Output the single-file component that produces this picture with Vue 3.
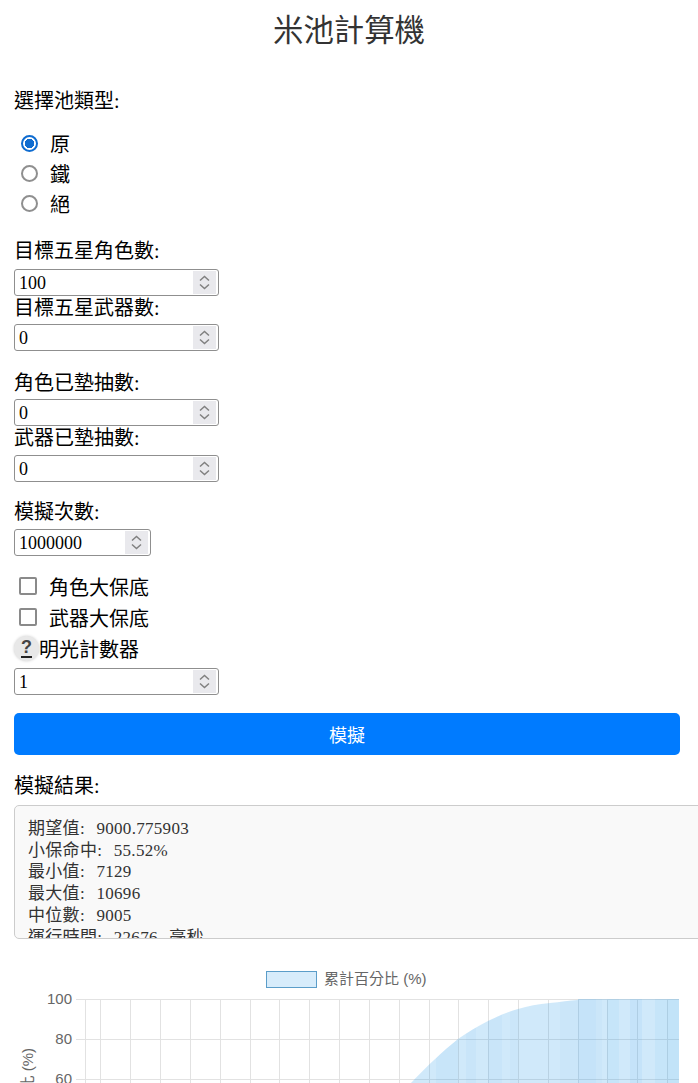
<script setup>
import { ref } from 'vue';

const poolTypes = ['原', '鐵', '絕'];
const pool = ref('原');

const resultLines = [
  '期望值: 9000.775903',
  '小保命中: 55.52%',
  '最小值: 7129',
  '最大值: 10696',
  '中位數: 9005',
  '運行時間: 22676 毫秒',
];

// chart gridlines, read off the reference
const xGrid = [85, 100, 130, 160, 190, 220, 250, 279, 309, 339, 369, 399, 429, 458, 488, 518, 548, 578, 607, 637, 667];
const yTicks = [
  { label: '100', y: 999 },
  { label: '80', y: 1039 },
  { label: '60', y: 1079 },
];

const curve = 'M411 1083 C427 1066 443 1051 458 1039 C468 1032 478 1026 488 1021 C498 1016 508 1012 518 1009 C528 1006 538 1004 550 1003 C560 1002 570 1000.5 578 1000 L578 999 L679 999 L679 1083 Z';
const bands = [
  { x: 436, w: 22, o: 0.05 },
  { x: 466, w: 10, o: 0.04 },
  { x: 488, w: 14, o: 0.04 },
  { x: 510, w: 8, o: 0.03 },
  { x: 560, w: 18, o: 0.03 },
  { x: 578, w: 18, o: 0.07 },
  { x: 596, w: 6, o: 0.03 },
  { x: 607, w: 12, o: 0.06 },
  { x: 630, w: 12, o: 0.07 },
  { x: 655, w: 12, o: 0.06 },
  { x: 667, w: 12, o: 0.09 },
];
</script>

<template>
  <div class="page">
    <h1 class="title">米池計算機</h1>

    <div class="group pool-group">
      <div class="label">選擇池類型:</div>
      <div class="radios">
        <label v-for="type in poolTypes" :key="type" class="option">
          <input v-model="pool" type="radio" name="pool" :value="type" class="radio">
          <span>{{ type }}</span>
        </label>
      </div>
    </div>

    <div class="group">
      <label class="label first">目標五星角色數:</label>
      <div class="field">
        <input class="num" type="number" value="100">
        <svg class="spin" width="23" height="23" viewBox="0 0 23 23"><path d="M7 9.5 L11.5 5.5 L16 9.5 M7 13.5 L11.5 17.5 L16 13.5" /></svg>
      </div>
      <label class="label">目標五星武器數:</label>
      <div class="field">
        <input class="num" type="number" value="0">
        <svg class="spin" width="23" height="23" viewBox="0 0 23 23"><path d="M7 9.5 L11.5 5.5 L16 9.5 M7 13.5 L11.5 17.5 L16 13.5" /></svg>
      </div>
    </div>

    <div class="group pity">
      <label class="label">角色已墊抽數:</label>
      <div class="field">
        <input class="num" type="number" value="0">
        <svg class="spin" width="23" height="23" viewBox="0 0 23 23"><path d="M7 9.5 L11.5 5.5 L16 9.5 M7 13.5 L11.5 17.5 L16 13.5" /></svg>
      </div>
      <label class="label">武器已墊抽數:</label>
      <div class="field">
        <input class="num" type="number" value="0">
        <svg class="spin" width="23" height="23" viewBox="0 0 23 23"><path d="M7 9.5 L11.5 5.5 L16 9.5 M7 13.5 L11.5 17.5 L16 13.5" /></svg>
      </div>
    </div>

    <div class="group sims">
      <label class="label">模擬次數:</label>
      <div class="field short">
        <input class="num" type="number" value="1000000">
        <svg class="spin" width="23" height="23" viewBox="0 0 23 23"><path d="M7 9.5 L11.5 5.5 L16 9.5 M7 13.5 L11.5 17.5 L16 13.5" /></svg>
      </div>
    </div>

    <div class="checks">
      <label class="option check-row">
        <input type="checkbox" class="check">
        <span>角色大保底</span>
      </label>
      <label class="option check-row">
        <input type="checkbox" class="check">
        <span>武器大保底</span>
      </label>
      <div class="counter-row">
        <span class="help"><span class="help-mark">?</span></span>
        <span>明光計數器</span>
      </div>
      <div class="field">
        <input class="num" type="number" value="1">
        <svg class="spin" width="23" height="23" viewBox="0 0 23 23"><path d="M7 9.5 L11.5 5.5 L16 9.5 M7 13.5 L11.5 17.5 L16 13.5" /></svg>
      </div>
    </div>

    <button class="run">模擬</button>

    <div class="label result-label">模擬結果:</div>
    <div class="result">
      <pre class="result-text">{{ resultLines.join('\n') }}</pre>
    </div>

    <svg class="chart" width="698" height="123" viewBox="0 960 698 123">
      <rect x="266.5" y="971.5" width="50" height="16" fill="#d7ecfb" stroke="#5b9dc9" />
      <text x="324" y="984" class="legend">累計百分比 (%)</text>

      <g stroke="#e2e2e2" stroke-width="1">
        <line v-for="x in xGrid" :key="x" :x1="x + 0.5" :x2="x + 0.5" y1="999" y2="1083" />
        <line v-for="t in yTicks" :key="t.y" x1="76" x2="679" :y1="t.y + 0.5" :y2="t.y + 0.5" />
      </g>

      <clipPath id="under"><path :d="curve" /></clipPath>
      <path :d="curve" fill="#36a2eb" fill-opacity="0.23" />
      <rect v-for="b in bands" :key="b.x" :x="b.x" y="999" :width="b.w" height="84" fill="#36a2eb" :fill-opacity="b.o" clip-path="url(#under)" />

      <text v-for="t in yTicks" :key="t.label" x="72" :y="t.y + 5" class="tick">{{ t.label }}</text>
      <text class="axis" transform="translate(33 1048) rotate(-90)">累計百分比 (%)</text>
    </svg>
  </div>
</template>

<style>
html, body {
  margin: 0;
  background: #fff;
}
</style>

<style scoped>
.page {
  box-sizing: border-box;
  width: 698px;
  height: 1083px;
  overflow: hidden;
  padding: 0 14px;
  color: #000;
  font-family: "Liberation Serif", "Noto Sans CJK TC", serif;
  font-size: 20px;
}

.title {
  margin: 0;
  padding-top: 12px;
  text-align: center;
  font-size: 30.4px;
  line-height: 38px;
  font-weight: 400;
  color: #333;
}

.group {
  display: flex;
  flex-direction: column;
  align-items: flex-start;
  margin-bottom: 19.5px;
}

.pool-group {
  margin-top: 39px;
  margin-bottom: 20.5px;
}

.label {
  display: block;
  height: 24px;
  line-height: 24px;
  margin-bottom: 4.5px;
}

.first {
  margin-bottom: 6px;
}

.radios {
  margin-top: 10.5px;
}

.option {
  display: flex;
  align-items: center;
  height: 30px;
}

.radio {
  appearance: none;
  box-sizing: border-box;
  width: 17px;
  height: 17px;
  margin: 0 12px 0 7px;
  border: 2px solid #8f8f8f;
  border-radius: 50%;
  background: #fff;
}

.radio:checked {
  border-color: #0f6cd0;
  background: radial-gradient(circle, #0f6cd0 0 4.5px, #fff 5px);
}

.field {
  position: relative;
  width: 205px;
  height: 27px;
}

.short {
  width: 137px;
}

.num {
  box-sizing: border-box;
  display: block;
  width: 100%;
  height: 100%;
  padding: 2px 4px 0;
  border: 1px solid #8f8f8f;
  border-radius: 3px;
  font-family: "Liberation Serif", serif;
  font-size: 18px;
  background: #fff;
  color: #000;
}

.num::-webkit-inner-spin-button {
  -webkit-appearance: none;
  margin: 0;
}

/* windows style stepper, drawn over the input */
.spin {
  position: absolute;
  top: 2px;
  right: 3px;
  background: #e9e9ed;
  pointer-events: none;
}

.spin path {
  fill: none;
  stroke: #808080;
  stroke-width: 1.5;
}

.pity {
  margin-bottom: 18.5px;
}

.sims {
  margin-bottom: 15px;
}

.checks {
  display: flex;
  flex-direction: column;
  align-items: flex-start;
}

.check-row {
  height: 31px;
}

.check {
  appearance: none;
  box-sizing: border-box;
  width: 18px;
  height: 18px;
  margin: 0 12px 0 5px;
  border: 2px solid #8a8a8a;
  border-radius: 2px;
  background: #fff;
}

.counter-row {
  display: flex;
  align-items: center;
  height: 31px;
  margin-bottom: 4.5px;
}

.help {
  display: flex;
  align-items: center;
  justify-content: center;
  width: 25px;
  height: 25px;
  border-radius: 50%;
  background: #e8e8e8;
  box-shadow: 0 0 3px rgba(0, 0, 0, 0.2);
}

.help-mark {
  display: block;
  width: 11px;
  line-height: 17px;
  text-align: center;
  border-bottom: 2px solid #222;
  font-family: "Liberation Sans", sans-serif;
  font-size: 18px;
  font-weight: 700;
  color: #444;
}

.run {
  display: block;
  width: 666px;
  height: 42px;
  margin: 18px 0 19px;
  border: 0;
  border-radius: 5px;
  background: #007bff;
  color: #fff;
  font-family: inherit;
  font-size: 18px;
}

.result-label {
  margin-bottom: 7px;
}

.result {
  box-sizing: border-box;
  width: 720px;
  height: 134px;
  overflow: hidden;
  padding: 12px 13px;
  border: 1px solid #ccc;
  border-radius: 5px;
  background: #f9f9f9;
}

.result-text {
  margin: 0;
  font-family: "Liberation Serif", "Noto Sans CJK TC", serif;
  font-size: 17px;
  letter-spacing: 0.3px;
  word-spacing: 7px;
  line-height: 21.7px;
  color: #333;
}

.chart {
  display: block;
  margin: 21px 0 0 -14px;
}

.legend {
  font-family: "Liberation Sans", "Noto Sans CJK TC", sans-serif;
  font-size: 15px;
  fill: #666;
}

.tick {
  font-family: "Liberation Sans", sans-serif;
  font-size: 15px;
  fill: #666;
  text-anchor: end;
}

/* long title, the lower part runs off the window as in the reference */
.axis {
  font-family: "Liberation Sans", "Noto Sans CJK TC", sans-serif;
  font-size: 15px;
  fill: #666;
  text-anchor: end;
}
</style>
